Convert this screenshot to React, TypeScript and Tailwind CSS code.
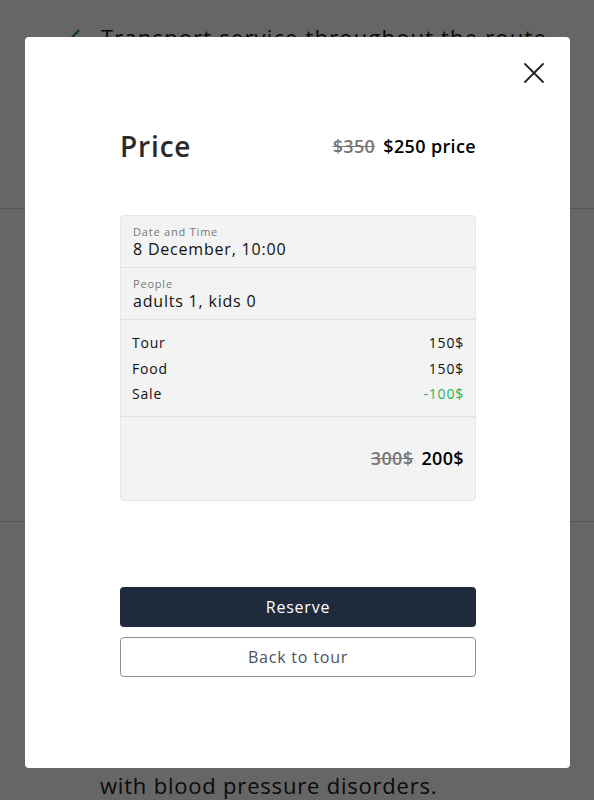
import React from 'react';

const font = { fontFamily: '"Open Sans", "Liberation Sans", sans-serif' };

function CloseIcon() {
  return (
    <svg width="22" height="22" viewBox="0 0 22 22" fill="none" stroke="#222" strokeWidth="1.8" strokeLinecap="round">
      <path d="M2 2L20 20M20 2L2 20" />
    </svg>
  );
}

export default function App() {
  return (
    <div className="relative h-[800px] w-full overflow-hidden bg-white tracking-[0.05em] text-[#1a1a1a]" style={font}>
      {/* page behind the modal */}
      <div className="flex flex-col">
        <div className="flex h-[209px] items-start gap-[20px] border-b border-[#d4d4d4] pl-[55px] pt-[22px]">
          <svg width="26" height="24" viewBox="0 0 26 24" fill="none" stroke="#1f8a4c" strokeWidth="2.2" className="mt-[4px]">
            <path d="M2 13l7 7L24 4" />
          </svg>
          <span className="text-[22px] leading-[30px] tracking-[0.053em]">Transport service throughout the route</span>
        </div>
        <div className="h-[313px] border-b border-[#d4d4d4]" />
        <div className="flex h-[278px] items-end pl-[100px]">
          <span className="text-[22px] leading-[30px]">with blood pressure disorders.</span>
        </div>
      </div>

      {/* overlay */}
      <div className="absolute inset-0 bg-black/60" />

      {/* modal */}
      <div className="absolute left-[25px] top-[37px] h-[731px] w-[545px] rounded-[4px] bg-white">
        <button className="absolute right-[25px] top-[25px] p-0">
          <CloseIcon />
        </button>
        <div className="flex flex-col pl-[95px] pr-[94px] pt-[91px]">
          <div className="flex h-[36px] items-center justify-between">
            <h2 className="text-[28px] font-semibold tracking-[0.03em] text-[#2a2a2a]">Price</h2>
            <div className="flex items-center gap-2 text-[18px] font-semibold tracking-[0.02em]">
              <span className="text-[#777] line-through">$350</span>
              <span className="text-black">$250 price</span>
            </div>
          </div>

          <div className="mt-[51px] overflow-hidden rounded-[4px] border border-[#e6e6e6] bg-[#f3f3f3]">
            <div className="border-b border-[#e0e0e0] px-[12px] pb-[8px] pt-[8px]">
              <div className="text-[11px] leading-[15px] text-[#777]">Date and Time</div>
              <div className="text-[16px] leading-[20px] text-[#111]">8 December, 10:00</div>
            </div>
            <div className="border-b border-[#e0e0e0] px-[12px] pb-[8px] pt-[8px]">
              <div className="text-[11px] leading-[15px] text-[#777]">People</div>
              <div className="text-[16px] leading-[20px] text-[#111]">adults 1, kids 0</div>
            </div>
            <div className="flex flex-col border-b border-[#e0e0e0] px-[11px] pb-[9px] pt-[10px] text-[14px] leading-[25.5px] text-[#111]">
              <div className="flex justify-between">
                <span>Tour</span>
                <span>150$</span>
              </div>
              <div className="flex justify-between">
                <span>Food</span>
                <span>150$</span>
              </div>
              <div className="flex justify-between">
                <span>Sale</span>
                <span className="text-[#22b35b]">-100$</span>
              </div>
            </div>
            <div className="flex h-[83px] items-center justify-end gap-2 px-[11px] text-[18px] font-semibold tracking-[0.02em]">
              <span className="text-[#777] line-through">300$</span>
              <span className="text-black">200$</span>
            </div>
          </div>

          <div className="mt-[86px] flex flex-col gap-[10px]">
            <button className="h-[40px] w-full rounded-[4px] bg-[#1f2a3d] text-[16px] text-white">Reserve</button>
            <button className="h-[40px] w-full rounded-[4px] border border-[#8b909a] bg-white text-[16px] text-[#4b5260]">
              Back to tour
            </button>
          </div>
        </div>
      </div>
    </div>
  );
}
